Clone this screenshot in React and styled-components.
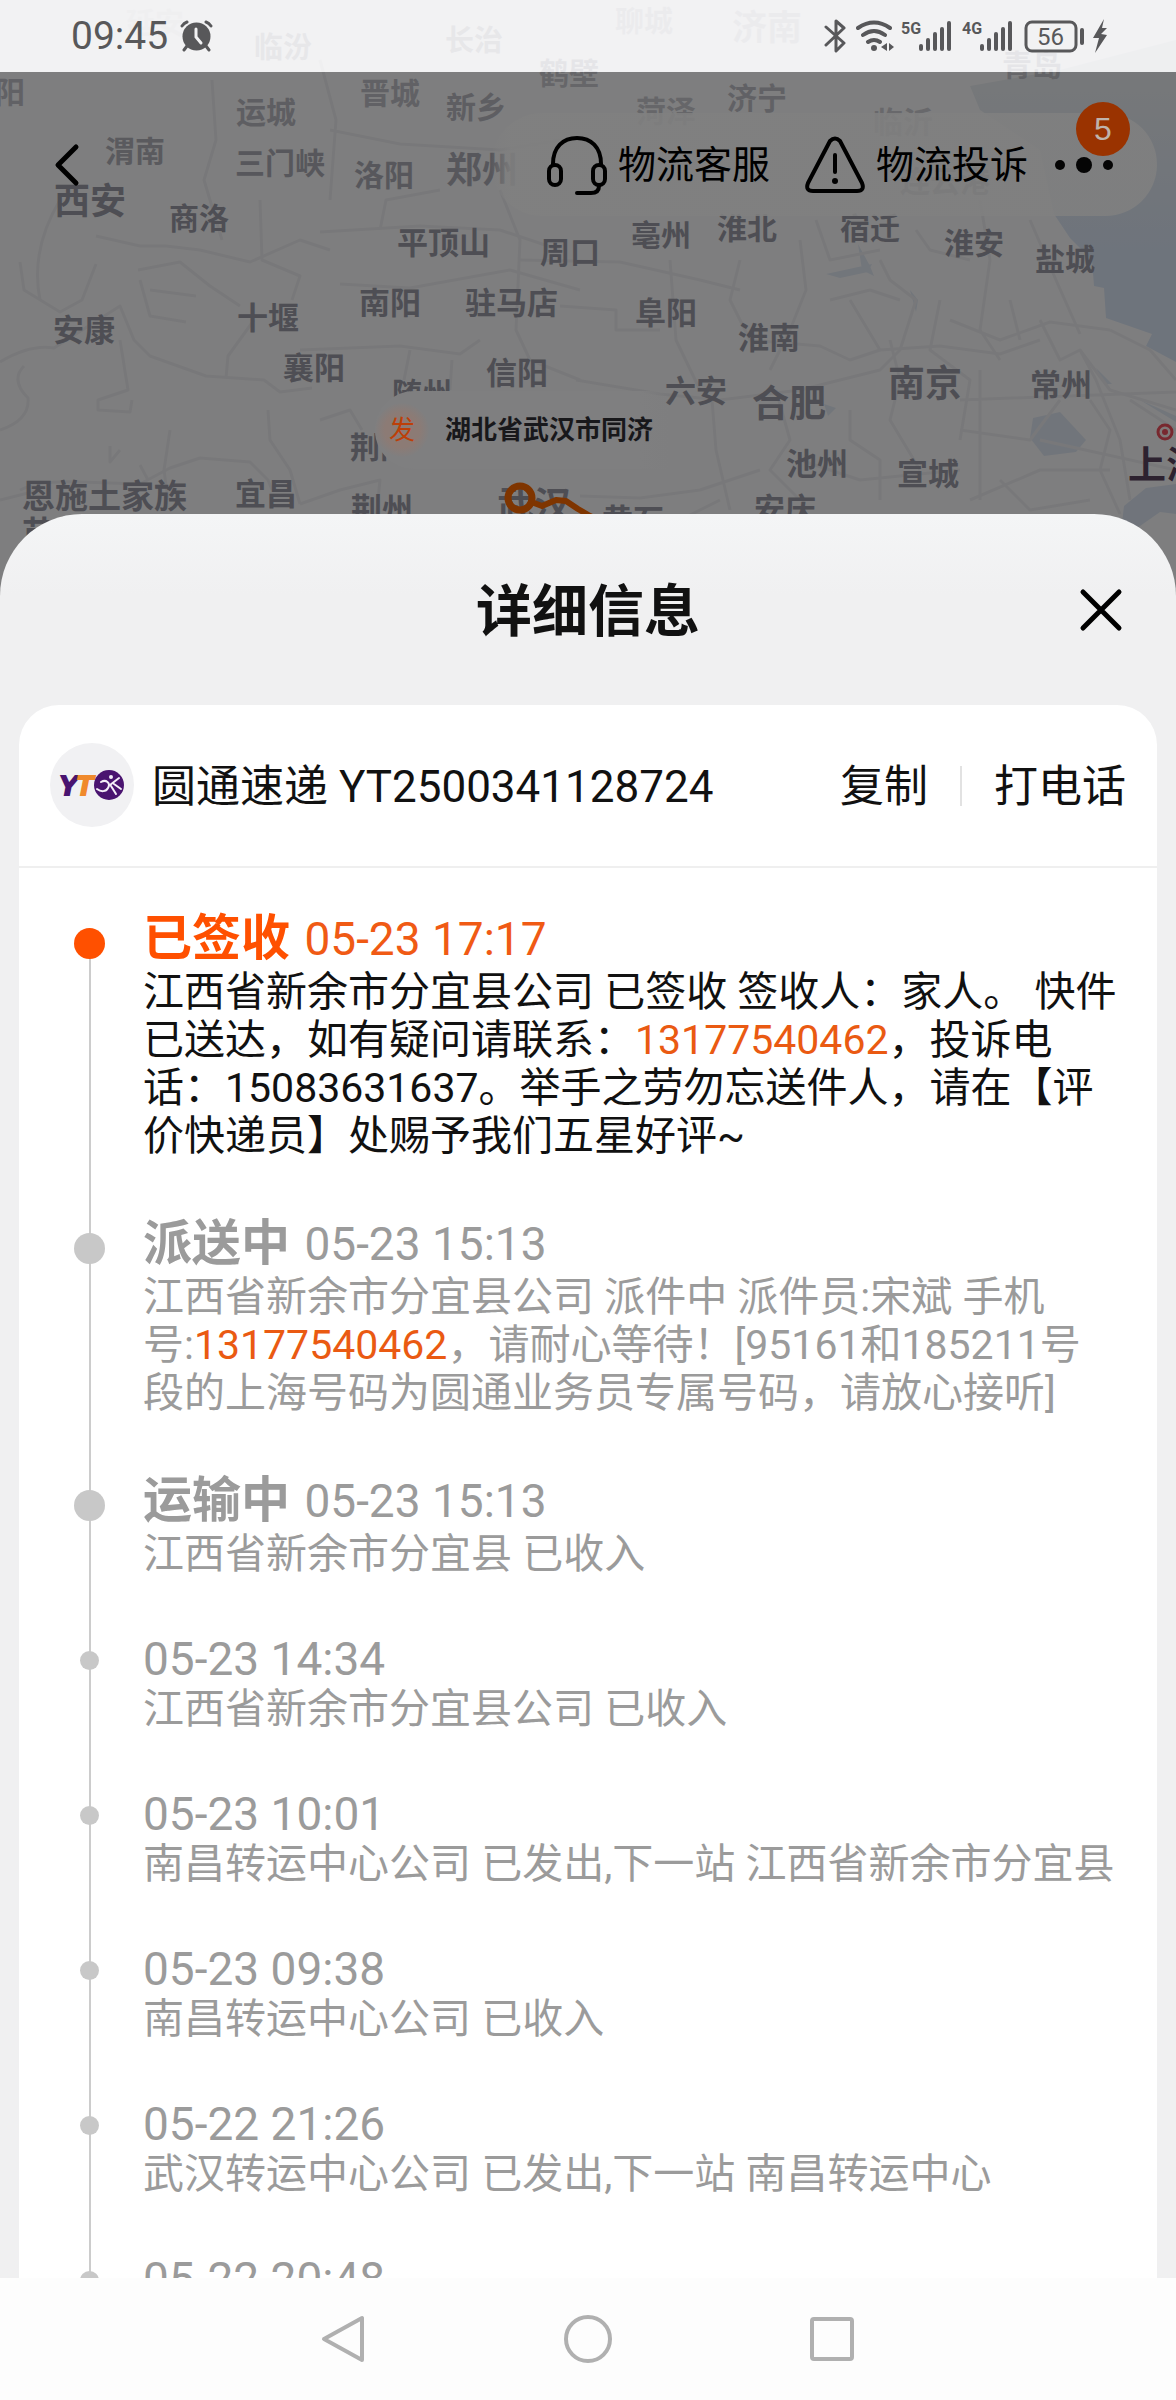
import React from 'react';
import styled, { createGlobalStyle } from 'styled-components';

const GlobalStyle = createGlobalStyle`
  * {
    box-sizing: border-box;
  }
  body {
    margin: 0;
    background: #f0f0f0;
    font-family: Roboto, "Noto Sans CJK SC", sans-serif;
    color: #111111;
  }
`;

const Screen = styled.div`
  position: relative;
  display: flex;
  flex-direction: column;
  height: 100vh;
  overflow: hidden;
`;

const Hero = styled.header`
  position: relative;
  flex: 0 0 514px;
`;

/* map */

const MapLayer = styled.div`
  position: absolute;
  top: 0;
  left: 0;
  right: 0;
  height: 640px;
  overflow: hidden;
  background: #fdfdfe;
`;

const MapSvg = styled.svg`
  display: block;
  width: 100%;
  height: 100%;
`;

const City = styled.text`
  font-family: "Noto Sans CJK SC", sans-serif;
  font-size: ${props => props.$size}px;
  font-weight: 700;
  fill: ${props => props.$fill};
  opacity: ${props => props.$opacity};
`;

const Dim = styled.div`
  position: absolute;
  top: 72px;
  left: 0;
  right: 0;
  bottom: 0;
  background: rgba(0, 0, 0, 0.5);
`;

const Callout = styled.div`
  position: absolute;
  top: 391px;
  left: 375px;
  display: flex;
  align-items: center;
  gap: 16px;
  height: 78px;
  padding-right: 16px;
  border-radius: 39px 0 0 39px;
  background: linear-gradient(90deg, #7f7f80 90%, rgba(127, 127, 128, 0));
  font-size: 26px;
  font-weight: 700;
  line-height: 36px;
  color: #18181b;
`;

const CalloutMark = styled.span`
  width: 54px;
  height: 54px;
  border-radius: 50%;
  background: radial-gradient(#8c7b75 45%, #7f7f80 72%);
  color: #bd3f08;
  font-weight: 400;
  line-height: 54px;
  text-align: center;
`;

// name, left, middle, size, opacity
const cities = [
  ['延安', 126, 23, 29, 0.1],
  ['临汾', 254, 47, 29, 0.45],
  ['长治', 445, 40, 29, 0.45],
  ['鹤壁', 539, 73, 30, 0.5],
  ['聊城', 615, 21, 29, 0.25],
  ['济南', 732, 27, 35, 0.25],
  ['青岛', 1002, 65, 30, 0.5],
  ['阳', -5, 92, 30, 0.6],
  ['运城', 236, 112, 30, 0.65],
  ['晋城', 360, 93, 30, 0.6],
  ['新乡', 446, 107, 30, 0.65],
  ['菏泽', 636, 111, 30, 0.5],
  ['济宁', 727, 98, 30, 0.6],
  ['临沂', 873, 122, 30, 0.45],
  ['渭南', 105, 151, 30, 0.75],
  ['三门峡', 235, 163, 30, 0.8],
  ['洛阳', 354, 175, 30, 0.8],
  ['郑州', 446, 169, 36, 0.8],
  ['西安', 54, 200, 36, 1],
  ['商洛', 169, 218, 30, 1],
  ['平顶山', 397, 242, 31, 1],
  ['周口', 540, 252, 30, 1],
  ['连云港', 900, 181, 30, 0.8],
  ['亳州', 631, 235, 30, 1],
  ['淮北', 717, 228, 30, 1],
  ['宿迁', 840, 228, 30, 1],
  ['淮安', 944, 243, 30, 1],
  ['盐城', 1035, 259, 30, 1],
  ['安康', 53, 329, 31, 1],
  ['十堰', 237, 317, 31, 1],
  ['南阳', 359, 302, 31, 1],
  ['驻马店', 465, 302, 31, 1],
  ['襄阳', 283, 367, 31, 1],
  ['随州', 392, 393, 30, 1],
  ['信阳', 486, 372, 31, 1],
  ['荆门', 350, 447, 30, 1],
  ['恩施土家族', 22, 495, 33, 1],
  ['苗族', 22, 532, 33, 1],
  ['宜昌', 235, 493, 31, 1],
  ['荆州', 351, 508, 31, 1],
  ['武汉', 497, 505, 37, 1],
  ['阜阳', 635, 312, 31, 1],
  ['淮南', 738, 337, 31, 1],
  ['六安', 665, 390, 31, 1],
  ['合肥', 752, 403, 37, 1],
  ['南京', 888, 383, 37, 1],
  ['常州', 1030, 384, 31, 1],
  ['池州', 786, 463, 31, 1],
  ['宣城', 897, 473, 31, 1],
  ['安庆', 754, 508, 31, 1],
  ['黄石', 602, 519, 31, 1],
];

const roads = [
  'M20 262 L24 290 L60 312 L82 300 L96 264 M0 362 Q30 344 54 348 L120 306 L134 340 L150 356 L206 376 L264 380 L280 392 L312 388',
  'M60 200 Q30 250 40 300 M96 236 L140 246 L166 246 L200 250 L250 262 L300 240 L330 250',
  'M260 200 L262 260 L300 276 L292 300 M254 320 L228 356 L226 378 M120 340 L128 390 L98 400 L98 410 L130 412 L132 400',
  'M0 430 Q30 420 28 398 Q10 380 24 366 M20 490 Q40 480 80 482 L140 484 L170 468 L200 458 L250 462 L268 480 L272 490',
  'M110 446 L110 462 L120 450 M140 465 L148 480 M170 430 L164 470 L168 500 M0 500 L40 490',
  'M268 410 L270 440 L290 470 L300 504 M320 420 L350 410 L362 430 M300 504 L340 490 L380 480 L376 520',
  'M138 270 L180 262 L210 286 L240 306 M140 280 L150 316 L186 322 M150 290 L196 296',
  'M212 80 L216 140 L204 180 L222 240 M330 130 L400 144 L500 150 L560 140 M320 60 L336 120 L330 200',
  'M320 232 L420 226 L500 230 L560 250 M380 230 L386 200 L440 190 M500 190 L520 240 L516 330 L530 360 L580 380',
  'M340 284 L410 288 L510 270 L580 290 M300 350 L400 346 L460 354 L480 340 M410 350 L404 380 M452 360 L450 390',
  'M520 260 L620 262 L700 280 L740 290 M560 306 L616 310 L616 330 L660 330 M670 260 L676 340 L700 390',
  'M576 380 L660 394 L720 400 L800 390 L880 370 L900 350 L916 300 L890 280 L880 260',
  'M800 240 L806 290 L790 330 L770 370 M740 260 L730 300 L750 340 L820 346 L850 360 L880 350',
  'M830 300 L870 290 L900 300 M816 220 L830 260 L880 250 M850 300 L880 350 L940 346 L1000 354 L1040 340',
  'M776 390 L790 440 L770 470 L800 500 M850 410 L850 440 L880 460 L880 500 M800 460 L860 480 L960 470',
  'M580 496 L640 498 L700 490 L760 470 M640 540 L680 520 L720 500 M712 400 L716 450 L730 510',
  'M916 230 L930 250 L970 260 M980 200 L990 260 L980 330 L1000 360 M950 320 L1000 340 L1050 322 L1110 330',
  'M1030 220 L1056 280 L1080 334 M1040 320 L1060 360 L1080 350 L1110 390 L1176 410 M1110 330 L1150 350 L1176 380',
  'M960 400 L1176 392 M980 370 L980 500 M960 430 L1030 440 L1060 400 M1080 350 L1096 380 L1120 440 L1130 500',
  'M970 500 L1040 470 L1110 470 M1000 480 L1030 510 L1090 500 M1090 400 L1110 430 L1100 470 L1120 514 M1040 440 L1176 470',
  'M890 340 L900 380 L890 420 L920 470 M940 300 L930 350 L970 380 L960 440 M1010 300 L1020 340 M1130 400 L1176 430',
];

const Map = () => (
  <MapSvg viewBox="0 0 1176 640" preserveAspectRatio="xMidYMin slice" aria-hidden="true">
    <defs>
      <linearGradient id="sea" gradientUnits="userSpaceOnUse" x1="0" y1="70" x2="0" y2="250">
        <stop offset="0" stopColor="#eef1f4" />
        <stop offset="1" stopColor="#dde8f8" />
      </linearGradient>
    </defs>
    <path d="M970 86 L1060 70 L1176 40 L1176 362 L1146 346 L1152 334 L1106 318 L1104 288 L1094 286 L1092 260 L1070 238 L1054 214 L1040 150 L980 110 Z" fill="url(#sea)" />
    <path d="M1033 418 L1060 412 L1086 440 L1076 452 L1044 456 L1030 438 Z" fill="#e3ebf7" />
    <path d="M1124 506 L1146 488 L1176 484 L1176 514 L1160 512 L1120 540 Z" fill="#e0e9f7" />
    <path d="M858 244 L870 266 L874 276 L862 270 Z M826 274 L872 264 L868 272 L840 278 Z M910 290 L918 300 L916 312 Z M1096 368 L1112 384 L1104 384 Z M1140 400 L1176 416 L1176 422 Z M824 404 L836 408 L828 416 Z" fill="#e5ecf7" />
    <g fill="none" stroke="#f1f1f4" strokeWidth="3" strokeLinejoin="round">
      {roads.map(d => <path key={d} d={d} />)}
    </g>
    {cities.map(([name, left, middle, size, opacity]) => (
      <City key={name} x={left} y={middle + Math.round(size * 0.38)} $size={size} $opacity={opacity} $fill="#9c9ca8">{name}</City>
    ))}
    <City x="1128" y="478" $size={38} $opacity={1} $fill="#5b4560">上海</City>
    <circle cx="1165" cy="432" r="7" fill="#fff0f0" stroke="#f0505e" strokeWidth="3" />
    <circle cx="1165" cy="432" r="3" fill="#f0505e" />
    <g fill="none" stroke="#ff6a00" strokeLinejoin="round" strokeLinecap="round">
      <circle cx="520" cy="498" r="12" strokeWidth="7" />
      <path d="M534 503 L542 506 L556 500 L566 501 L578 509 L590 516 L604 522" strokeWidth="6" />
    </g>
  </MapSvg>
);

/* status bar */

const StatusBar = styled.div`
  position: relative;
  display: flex;
  align-items: center;
  justify-content: space-between;
  height: 72px;
  padding: 0 68px 0 71px;
  background: rgba(238, 238, 239, 0.75);
  color: #58585a;
`;

const StatusTime = styled.time`
  display: flex;
  align-items: center;
  gap: 12px;
  font-size: 39px;
`;

const StatusIcons = styled.svg`
  display: block;
  width: 284px;
  height: 36px;
`;

const Network = styled.text`
  font-family: Roboto, sans-serif;
  font-size: ${props => props.$size}px;
  font-weight: ${props => (props.$bold ? 700 : 400)};
  fill: #58585a;
`;

const AlarmIcon = () => (
  <svg width="33" height="32" viewBox="0 0 33 32" fill="none" stroke="#58585a" strokeLinecap="round">
    <circle cx="16.500" cy="16.500" r="14" fill="#58585a" stroke="none" />
    <path d="M2 6 Q4 3 7 2 M31 6 Q29 3 26 2 M7 26 L4 30 M26 26 L29 30" strokeWidth="3" />
    <path d="M16 9 V17 L21 23" stroke="#f2f2f3" strokeWidth="3" />
  </svg>
);

const bars = [7, 13, 19, 24, 30];

const Bars = ({ x }) => bars.map((height, i) => (
  <rect key={height} x={x + i * 7} y={34 - height} width="4" height={height} rx="2" />
));

const StatusGlyphs = () => (
  <StatusIcons viewBox="824 18 284 36" fill="none" stroke="#58585a" strokeWidth="3" strokeLinecap="round" strokeLinejoin="round">
    <path d="M826 27 L844 43 L836 51 V21 L844 28 L826 45" />
    <path d="M858 28 Q874 17 890 28 M863 35 Q874 27 885 35 M868 42 Q874 38 880 42" strokeWidth="4" />
    <g fill="#58585a" stroke="none">
      <circle cx="874" cy="48" r="3" />
      <path d="M887 43 V51 L881 47 Z M889 43 V51 L894 47 Z" />
      <g transform="translate(0 17)">
        <Bars x={919} />
        <Bars x={980} />
      </g>
      <rect x="1080" y="28" width="4" height="17" rx="2" />
      <path d="M1104 19 L1093 38 L1099 38 L1095 53 L1107 35 L1101 34 L1107 28 L1102 28 Z" />
    </g>
    <rect x="1026" y="22" width="50" height="29" rx="6" />
    <g stroke="none">
      <Network x="901" y="34" $size={16} $bold>5G</Network>
      <Network x="962" y="34" $size={16} $bold>4G</Network>
      <Network x="1037" y="45" $size={24}>56</Network>
    </g>
  </StatusIcons>
);

/* top bar */

const TopBar = styled.nav`
  position: relative;
  display: flex;
  align-items: center;
  justify-content: space-between;
  margin-top: 41px;
  padding: 0 19px 0 54px;
`;

const IconButton = styled.button`
  display: flex;
  padding: 0;
  border: 0;
  background: none;
  cursor: pointer;
`;

const Actions = styled.div`
  display: flex;
  align-items: center;
  height: 103px;
  padding: 0 43px 0 56px;
  border-radius: 52px;
  background: linear-gradient(90deg, rgba(127, 127, 127, 0), rgba(128, 128, 128, 0.88) 3%);
`;

const ActionButton = styled.button`
  display: flex;
  align-items: center;
  gap: 11px;
  margin-right: 35px;
  padding: 0;
  border: 0;
  background: none;
  font-family: inherit;
  font-size: 38px;
  line-height: 60px;
  color: #000000;
  white-space: nowrap;
  cursor: pointer;
`;

const MoreButton = styled(IconButton)`
  position: relative;
  margin-left: -9px;
`;

const Badge = styled.span`
  position: absolute;
  left: 22px;
  bottom: 18px;
  width: 54px;
  height: 54px;
  border-radius: 50%;
  background: #9a3300;
  color: #bfb3ab;
  font-size: 32px;
  line-height: 54px;
  text-align: center;
`;

const BackIcon = () => (
  <svg width="28" height="44" viewBox="0 0 28 44" fill="none" stroke="#000" strokeWidth="5" strokeLinecap="round" strokeLinejoin="round">
    <path d="M22 4 L4 22 L22 40" />
  </svg>
);

const HeadsetIcon = () => (
  <svg width="60" height="60" viewBox="0 0 60 60" fill="none" stroke="#000" strokeWidth="4" strokeLinecap="round">
    <path d="M6 29 C6 12 16 3 30 3 C44 3 54 12 54 29" />
    <rect x="2" y="30" width="12" height="20" rx="6" />
    <rect x="46" y="30" width="12" height="20" rx="6" />
    <path d="M52 51 C52 56 49 58 44 58 H30" />
  </svg>
);

const AlertIcon = () => (
  <svg width="60" height="58" viewBox="0 0 60 58" fill="none" stroke="#000" strokeWidth="4" strokeLinecap="round" strokeLinejoin="round">
    <path d="M25 5 Q30 0 35 5 L57 47 Q60 55 52 55 H8 Q0 55 3 47 Z" />
    <path d="M30 19 V36" />
    <circle cx="30" cy="45" r="3" fill="#000" stroke="none" />
  </svg>
);

const MoreIcon = () => (
  <svg width="60" height="18" viewBox="0 0 60 18" fill="#050505">
    <circle cx="6" cy="9" r="5" />
    <circle cx="30" cy="9" r="8" />
    <circle cx="54" cy="9" r="5" />
  </svg>
);

/* sheet */

const Sheet = styled.main`
  position: relative;
  display: flex;
  flex: 1;
  flex-direction: column;
  min-height: 0;
  padding: 0 19px;
  border-radius: 82px 82px 0 0;
  background: linear-gradient(#f4f5f6, #f0f0f1 80px);
`;

const SheetHeader = styled.div`
  display: grid;
  flex: none;
  grid-template-columns: 1fr auto 1fr;
  align-items: center;
  height: 191px;
  padding: 0 34px;
`;

const SheetTitle = styled.h1`
  grid-column: 2;
  margin: 0;
  padding-top: 4px;
  font-size: 56px;
  line-height: 80px;
`;

const CloseButton = styled(IconButton)`
  justify-self: end;
`;

const Card = styled.section`
  flex: 1;
  min-height: 0;
  overflow: hidden;
  border-radius: 40px 40px 0 0;
  background: #ffffff;
`;

const Carrier = styled.div`
  display: flex;
  align-items: center;
  height: 163px;
  padding: 0 31px;
  border-bottom: 2px solid #efefef;
  font-size: 44px;
  line-height: 64px;
  white-space: nowrap;
`;

const CarrierLogo = styled.svg`
  flex: none;
  width: 85px;
  height: 85px;
  margin-right: 17px;
`;

const LogoText = styled.text`
  font-family: "Liberation Sans", Arial, sans-serif;
  font-size: 28px;
  font-style: italic;
  font-weight: 700;
  stroke: currentColor;
  stroke-width: 2px;
`;

const CarrierName = styled.h2`
  flex: 1;
  margin: 0;
  padding-top: 2px;
  font-size: 44px;
  font-weight: 400;
`;

const TextButton = styled.button`
  padding: 2px 0 0;
  border: 0;
  background: none;
  color: inherit;
  font: inherit;
  cursor: pointer;
`;

const Separator = styled.span`
  width: 2px;
  height: 40px;
  margin: 0 32px;
  background: #e2e2e2;
`;

const Timeline = styled.ol`
  margin: 0;
  padding: 42px 37px 0 55px;
  list-style: none;
`;

const Entry = styled.li`
  display: grid;
  grid-template-columns: 31px 1fr;
  column-gap: 38px;
  color: ${props => (props.$current ? '#111111' : '#9b9b9b')};
`;

const Track = styled.div`
  background: linear-gradient(#cccccc, #cccccc) center / 2px 100% no-repeat;
  ${props => props.$current && 'background-position: center 30px;'}
`;

const Dot = styled.span`
  display: block;
  width: ${props => (props.$small ? 19 : 31)}px;
  height: ${props => (props.$small ? 19 : 31)}px;
  margin: 18px auto 0;
  border-radius: 50%;
  background: ${props => (props.$current ? '#ff5000' : '#c8c8c8')};
`;

const EntryBody = styled.div`
  padding-bottom: 55px;
`;

const EntryHeading = styled.h3`
  margin: 0;
  font-size: 46px;
  font-weight: 400;
  line-height: ${props => (props.$small ? 52 : 58)}px;
  color: ${props => (props.$current ? '#f05a14' : 'inherit')};
`;

const EntryStatus = styled.strong`
  margin-right: 3px;
  font-size: 49px;
  font-weight: 700;
  color: ${props => (props.$current ? '#ff5000' : 'inherit')};
`;

const EntryText = styled.p`
  margin: 0;
  font-size: 41px;
  line-height: 48px;
`;

const Phone = styled.a`
  color: #ea5a12;
  text-decoration: none;
`;

const phone = <Phone href="tel:13177540462">13177540462</Phone>;

const entries = [
  {
    status: '已签收',
    time: '05-23 17:17',
    text: <>江西省新余市分宜县公司 已签收 签收人：家人。 快件已送达，如有疑问请联系：{phone}，投诉电话：15083631637。举手之劳勿忘送件人，请在【评价快递员】处赐予我们五星好评~</>
  },
  {
    status: '派送中',
    time: '05-23 15:13',
    text: <>江西省新余市分宜县公司 派件中 派件员:宋斌 手机号:{phone}，请耐心等待！[95161和185211号段的上海号码为圆通业务员专属号码，请放心接听]</>
  },
  { status: '运输中', time: '05-23 15:13', text: '江西省新余市分宜县 已收入' },
  { time: '05-23 14:34', text: '江西省新余市分宜县公司 已收入' },
  { time: '05-23 10:01', text: '南昌转运中心公司 已发出,下一站 江西省新余市分宜县' },
  { time: '05-23 09:38', text: '南昌转运中心公司 已收入' },
  { time: '05-22 21:26', text: '武汉转运中心公司 已发出,下一站 南昌转运中心' },
  { time: '05-22 20:48', text: '' },
];

const TimelineEntry = ({ entry, current }) => (
  <Entry $current={current}>
    <Track $current={current}>
      <Dot $small={!entry.status} $current={current} />
    </Track>
    <EntryBody>
      <EntryHeading $small={!entry.status} $current={current}>
        {entry.status && <><EntryStatus $current={current}>{entry.status}</EntryStatus>{' '}</>}
        {entry.time}
      </EntryHeading>
      <EntryText>{entry.text}</EntryText>
    </EntryBody>
  </Entry>
);

/* system navigation */

const SystemNav = styled.nav`
  position: relative;
  display: flex;
  flex: none;
  align-items: center;
  justify-content: center;
  gap: 196px;
  height: 122px;
  background: #fdfdfd;
`;

const NavButton = ({ label, children }) => (
  <IconButton aria-label={label}>
    <svg width="48" height="50" viewBox="0 0 48 50" fill="none" stroke="#b0b0b0" strokeWidth="4" strokeLinejoin="round">
      {children}
    </svg>
  </IconButton>
);

const App = () => (
  <Screen>
    <GlobalStyle />
    <MapLayer>
      <Map />
      <Dim />
      <Callout>
        <CalloutMark>发</CalloutMark>
        湖北省武汉市同济
      </Callout>
    </MapLayer>
    <Hero>
      <StatusBar>
        <StatusTime>09:45<AlarmIcon /></StatusTime>
        <StatusGlyphs />
      </StatusBar>
      <TopBar>
        <IconButton aria-label="返回"><BackIcon /></IconButton>
        <Actions>
          <ActionButton><HeadsetIcon />物流客服</ActionButton>
          <ActionButton><AlertIcon />物流投诉</ActionButton>
          <MoreButton aria-label="更多">
            <MoreIcon />
            <Badge>5</Badge>
          </MoreButton>
        </Actions>
      </TopBar>
    </Hero>
    <Sheet>
      <SheetHeader>
        <SheetTitle>详细信息</SheetTitle>
        <CloseButton aria-label="关闭">
          <svg width="44" height="44" viewBox="0 0 44 44" stroke="#000" strokeWidth="5" strokeLinecap="round">
            <path d="M4 4 L40 40 M40 4 L4 40" />
          </svg>
        </CloseButton>
      </SheetHeader>
      <Card>
        <Carrier>
          <CarrierLogo viewBox="0 0 85 85" role="img" aria-label="圆通速递">
            <circle cx="42" cy="42" r="42" fill="#f1f1f3" />
            <LogoText x="9" y="52" color="#4a1470" fill="currentColor">Y</LogoText>
            <LogoText x="26" y="52" color="#f08a2c" fill="currentColor">T</LogoText>
            <circle cx="59" cy="42" r="15" fill="#4a1470" />
            <g fill="none" stroke="#f4eef8" strokeWidth="2" strokeLinecap="round">
              <path d="M51 39 C56 36 61 40 58 45 C56 49 51 49 47 46 M60 42 L69 35 M61 43 L66 51 M64 41 L71 46" />
              <circle cx="61" cy="34" r="1" fill="#f4eef8" />
            </g>
          </CarrierLogo>
          <CarrierName>圆通速递 YT2500341128724</CarrierName>
          <TextButton>复制</TextButton>
          <Separator />
          <TextButton>打电话</TextButton>
        </Carrier>
        <Timeline>
          {entries.map((entry, i) => (
            <TimelineEntry key={i} entry={entry} current={i === 0} />
          ))}
        </Timeline>
      </Card>
    </Sheet>
    <SystemNav>
      <NavButton label="后退"><path d="M42 4 V46 L4 25 Z" /></NavButton>
      <NavButton label="主页"><circle cx="24" cy="25" r="22" /></NavButton>
      <NavButton label="最近"><rect x="4" y="5" width="40" height="40" rx="2" /></NavButton>
    </SystemNav>
  </Screen>
);

export default App;
